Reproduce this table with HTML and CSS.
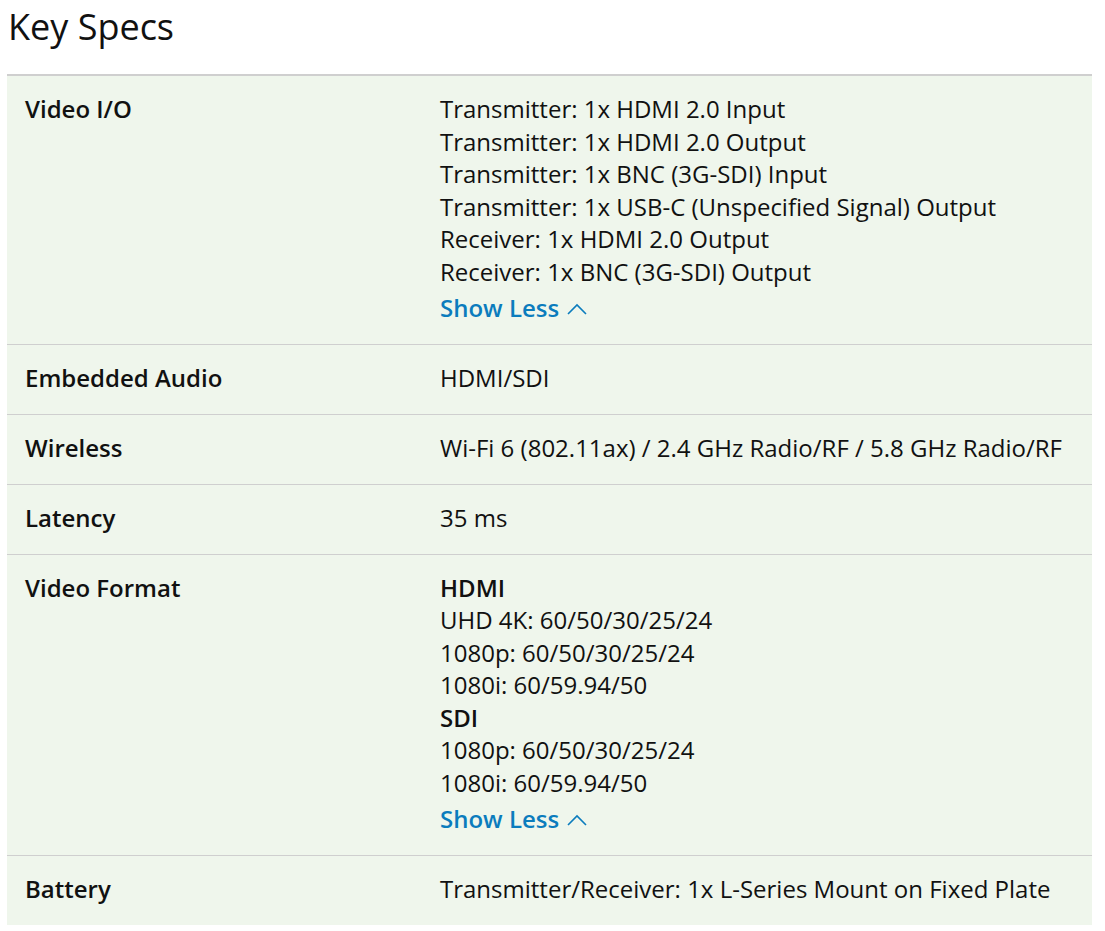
FILE: index.html
```html
<!DOCTYPE html>
<html lang="en">
<head>
  <meta charset="UTF-8">
  <meta name="viewport" content="width=device-width, initial-scale=1.0">
  <title>Key Specs</title>
  <link rel="stylesheet" href="styles.css">
</head>
<body>

  <!-- Heading -->
  <h1 class="title">Key Specs</h1>

  <!-- Spec table -->
  <div class="specs">
    <div class="row">
      <div class="label">Video I/O</div>
      <div class="value">
        <div>Transmitter: 1x HDMI 2.0 Input</div>
        <div>Transmitter: 1x HDMI 2.0 Output</div>
        <div>Transmitter: 1x BNC (3G-SDI) Input</div>
        <div>Transmitter: 1x USB-C (Unspecified Signal) Output</div>
        <div>Receiver: 1x HDMI 2.0 Output</div>
        <div>Receiver: 1x BNC (3G-SDI) Output</div>
        <a class="toggle" href="#">Show Less <svg width="20" height="12" viewBox="0 0 20 12"><path d="M1 11 L10 2 L19 11" fill="none" stroke="currentColor" stroke-width="1.6"/></svg></a>
      </div>
    </div>
    <div class="row">
      <div class="label">Embedded Audio</div>
      <div class="value">HDMI/SDI</div>
    </div>
    <div class="row">
      <div class="label">Wireless</div>
      <div class="value">Wi-Fi 6 (802.11ax) / 2.4 GHz Radio/RF / 5.8 GHz Radio/RF</div>
    </div>
    <div class="row">
      <div class="label">Latency</div>
      <div class="value">35 ms</div>
    </div>
    <div class="row">
      <div class="label">Video Format</div>
      <div class="value">
        <div class="sub">HDMI</div>
        <div>UHD 4K: 60/50/30/25/24</div>
        <div>1080p: 60/50/30/25/24</div>
        <div>1080i: 60/59.94/50</div>
        <div class="sub">SDI</div>
        <div>1080p: 60/50/30/25/24</div>
        <div>1080i: 60/59.94/50</div>
        <a class="toggle" href="#">Show Less <svg width="20" height="12" viewBox="0 0 20 12"><path d="M1 11 L10 2 L19 11" fill="none" stroke="currentColor" stroke-width="1.6"/></svg></a>
      </div>
    </div>
    <div class="row">
      <div class="label">Battery</div>
      <div class="value">Transmitter/Receiver: 1x L-Series Mount on Fixed Plate</div>
    </div>
  </div>

</body>
</html>
```

FILE: styles.css
```css
body {
  margin: 0;
  padding: 0 13px 0 7px;
  font-family: 'Open Sans', sans-serif;
  color: #111;
  background: #fff;
}

.title {
  margin: 0;
  padding: 2px 0 0 1px;
  height: 72px;
  font-size: 36px;
  font-weight: 400;
  line-height: 50px;
}

.specs {
  background: #eff6ec;
  border-top: 2px solid #cfcfcf;
}

.row {
  display: flex;
  padding: 17px 18px 19.4px;
  border-top: 1px solid #cfcfcf;
  font-size: 24px;
  line-height: 32.6px;
}

.row:first-child {
  border-top: none;
}

.label {
  width: 415px;
  flex: none;
  font-weight: 600;
}

.value {
  flex: 1;
}

.sub {
  font-weight: 600;
}

.toggle {
  display: inline-flex;
  align-items: center;
  gap: 8px;
  margin-top: 3px;
  color: #0b7cbd;
  font-weight: 600;
  text-decoration: none;
}

.toggle svg {
  margin-top: 3px;
}
```
